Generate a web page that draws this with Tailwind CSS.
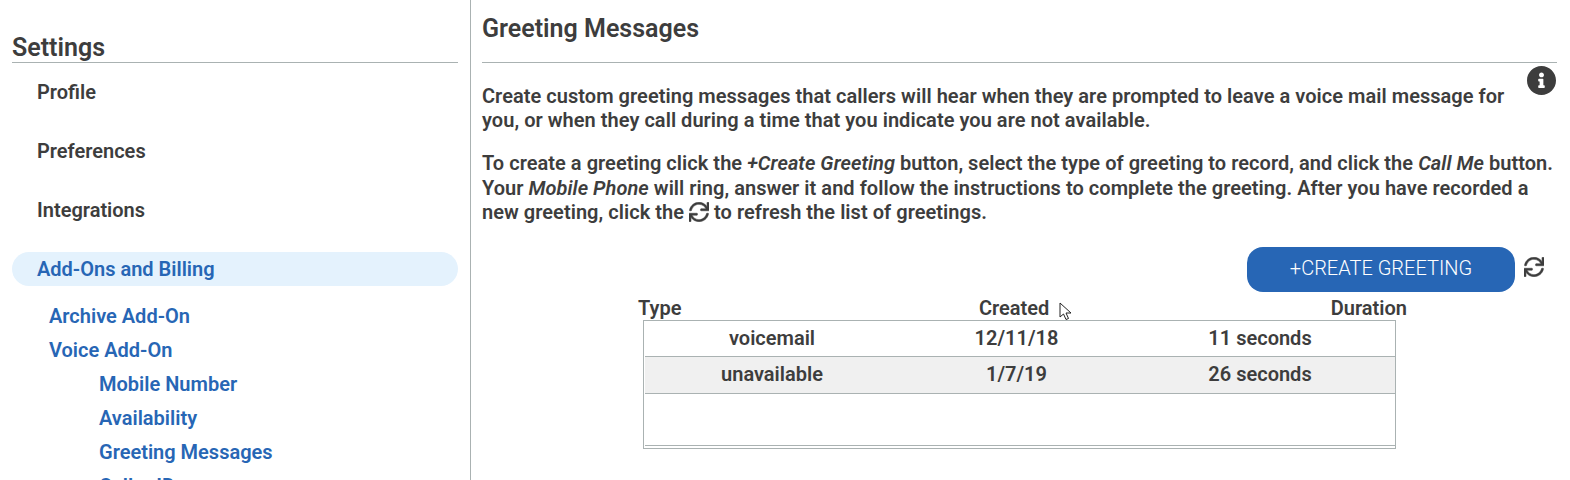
<!DOCTYPE html>
<html>
<head>
<meta charset="utf-8">
<script src="https://cdn.jsdelivr.net/npm/@tailwindcss/browser@4"></script>
</head>
<body class="bg-white">
<div class="flex h-[480px] w-[1570px] overflow-hidden font-['Roboto',sans-serif] font-semibold text-[#3d3d3d] text-[20px] leading-[24px]">
  <aside class="w-[471px] h-full shrink-0 border-r border-[#aab2b2] pl-[12px] pr-[12px] overflow-hidden">
    <h2 class="h-[63px] pt-[34px] border-b border-[#aab2b2] text-[25px] leading-[28px] font-semibold">Settings</h2>
    <nav class="flex flex-col">
      <a class="h-[59px] pl-[25px] pt-[17px] block">Profile</a>
      <a class="h-[59px] pl-[25px] pt-[17px] block">Preferences</a>
      <a class="h-[59px] pl-[25px] pt-[17px] block">Integrations</a>
      <a class="h-[34px] mt-[12px] pl-[25px] pt-[5px] block rounded-full bg-[#e4f2fd] text-[#2766b5]">Add-Ons and Billing</a>
      <div class="mt-[13px] flex flex-col text-[#2766b5]">
        <a class="h-[34px] pl-[37px] pt-[5px] block">Archive Add-On</a>
        <a class="h-[34px] pl-[37px] pt-[5px] block">Voice Add-On</a>
        <a class="h-[34px] pl-[87px] pt-[5px] block">Mobile Number</a>
        <a class="h-[34px] pl-[87px] pt-[5px] block">Availability</a>
        <a class="h-[34px] pl-[87px] pt-[5px] block">Greeting Messages</a>
        <a class="h-[34px] pl-[87px] pt-[5px] block">Caller ID</a>
      </div>
    </nav>
  </aside>
  <main class="relative flex-1 pl-[11px] pr-[13px]">
    <h1 class="h-[63px] pt-[14px] border-b border-[#aab2b2] text-[25px] leading-[30px] font-semibold">Greeting Messages</h1>
    <svg class="absolute left-[1056px] top-[66px]" width="29" height="29" viewBox="8 8 496 496"><path fill="#3d3d3d" d="M256 8C119.043 8 8 119.083 8 256c0 136.997 111.043 248 248 248s248-111.003 248-248C504 119.083 392.957 8 256 8zm0 110c23.196 0 42 18.804 42 42s-18.804 42-42 42-42-18.804-42-42 18.804-42 42-42zm56 254c0 6.627-5.373 12-12 12h-88c-6.627 0-12-5.373-12-12v-24c0-6.627 5.373-12 12-12h12v-64h-12c-6.627 0-12-5.373-12-12v-24c0-6.627 5.373-12 12-12h64c6.627 0 12 5.373 12 12v100h12c6.627 0 12 5.373 12 12v24z"/></svg>
    <div class="pt-[21px] tracking-[0.04px]">
      <p class="w-[1040px]">Create custom greeting messages that callers will hear when they are prompted to leave a voice mail message for you, or when they call during a time that you indicate you are not available.</p>
      <p class="mt-[19px] leading-[24.5px]">To create a greeting click the <em>+Create Greeting</em> button, select the type of greeting to record, and click the <em>Call Me</em> button. Your <em>Mobile Phone</em> will ring, answer it and follow the instructions to complete the greeting. After you have recorded a new greeting, click the <svg class="inline-block align-[-3px]" width="20" height="20" viewBox="0 0 512 512"><path fill="#3d3d3d" stroke="#3d3d3d" stroke-width="14" d="M500 8h-27.711c-6.739 0-12.157 5.548-11.997 12.286l2.347 98.575C418.212 52.043 342.256 8 256 8 134.813 8 33.933 94.924 12.296 209.824 10.908 217.193 16.604 224 24.103 224h28.576c5.674 0 10.542-3.982 11.737-9.529C83.441 126.128 161.917 60 256 60c79.545 0 147.942 47.282 178.676 115.302l-126.39-3.009c-6.737-.16-12.286 5.257-12.286 11.997V212c0 6.627 5.373 12 12 12h192c6.627 0 12-5.373 12-12V20c0-6.627-5.373-12-12-12zm-12.103 280h-28.576c-5.674 0-10.542 3.982-11.737 9.529C428.559 385.872 350.083 452 256 452c-79.546 0-147.942-47.282-178.676-115.302l126.39 3.009c6.737.16 12.286-5.257 12.286-11.997V300c0-6.627-5.373-12-12-12H12c-6.627 0-12 5.373-12 12v192c0 6.627 5.373 12 12 12h27.711c6.739 0 12.157-5.548 11.997-12.286l-2.347-98.575C93.788 459.957 169.744 504 256 504c121.187 0 222.067-86.924 243.704-201.824 1.388-7.369-4.308-14.176-11.807-14.176z"/></svg> to refresh the list of greetings.</p>
    </div>
    <div class="mt-[22px] flex justify-end items-center pr-[13px]">
      <button class="w-[268px] h-[45px] pb-[3px] rounded-[16px] bg-[#2766b5] text-white font-light text-[20px]">+CREATE GREETING</button>
      <svg class="ml-[9px] mb-[4px]" width="20" height="20" viewBox="0 0 512 512"><path fill="#3d3d3d" stroke="#3d3d3d" stroke-width="14" d="M500 8h-27.711c-6.739 0-12.157 5.548-11.997 12.286l2.347 98.575C418.212 52.043 342.256 8 256 8 134.813 8 33.933 94.924 12.296 209.824 10.908 217.193 16.604 224 24.103 224h28.576c5.674 0 10.542-3.982 11.737-9.529C83.441 126.128 161.917 60 256 60c79.545 0 147.942 47.282 178.676 115.302l-126.39-3.009c-6.737-.16-12.286 5.257-12.286 11.997V212c0 6.627 5.373 12 12 12h192c6.627 0 12-5.373 12-12V20c0-6.627-5.373-12-12-12zm-12.103 280h-28.576c-5.674 0-10.542 3.982-11.737 9.529C428.559 385.872 350.083 452 256 452c-79.546 0-147.942-47.282-178.676-115.302l126.39 3.009c6.737.16 12.286-5.257 12.286-11.997V300c0-6.627-5.373-12-12-12H12c-6.627 0-12 5.373-12 12v192c0 6.627 5.373 12 12 12h27.711c6.739 0 12.157-5.548 11.997-12.286l-2.347-98.575C93.788 459.957 169.744 504 256 504c121.187 0 222.067-86.924 243.704-201.824 1.388-7.369-4.308-14.176-11.807-14.176z"/></svg>
    </div>
    <div class="relative mt-[4px] ml-[156px] w-[769px] h-[24px] flex justify-between">
      <span>Type</span><span class="ml-[16px]">Created</span><span>Duration</span>
      <svg class="absolute left-[421px] top-[6px]" width="14" height="20" viewBox="0 0 14 20"><path d="M1 1v14l3.500-3 2.500 5.500 2.500-1-2.500-5.500h5z" fill="#fff" stroke="#222" stroke-width="1"/></svg>
    </div>
    <div class="ml-[161px] w-[753px] h-[129px] border border-[#aab2b2] pl-[1px] pb-[2px]">
      <div class="h-full border-b border-[#aab2b2] flex flex-col">
        <div class="h-[36px] pb-[1px] grid grid-cols-[254px_235px_1fr] items-center border-b border-[#aab2b2] text-center"><span>voicemail</span><span>12/11/18</span><span class="mr-[9px]">11 seconds</span></div>
        <div class="h-[37px] pb-[1px] grid grid-cols-[254px_235px_1fr] items-center border-b border-[#aab2b2] bg-[#f0f0f0] text-center"><span>unavailable</span><span>1/7/19</span><span class="mr-[9px]">26 seconds</span></div>
      </div>
    </div>
  </main>
</div>
</body>
</html>
